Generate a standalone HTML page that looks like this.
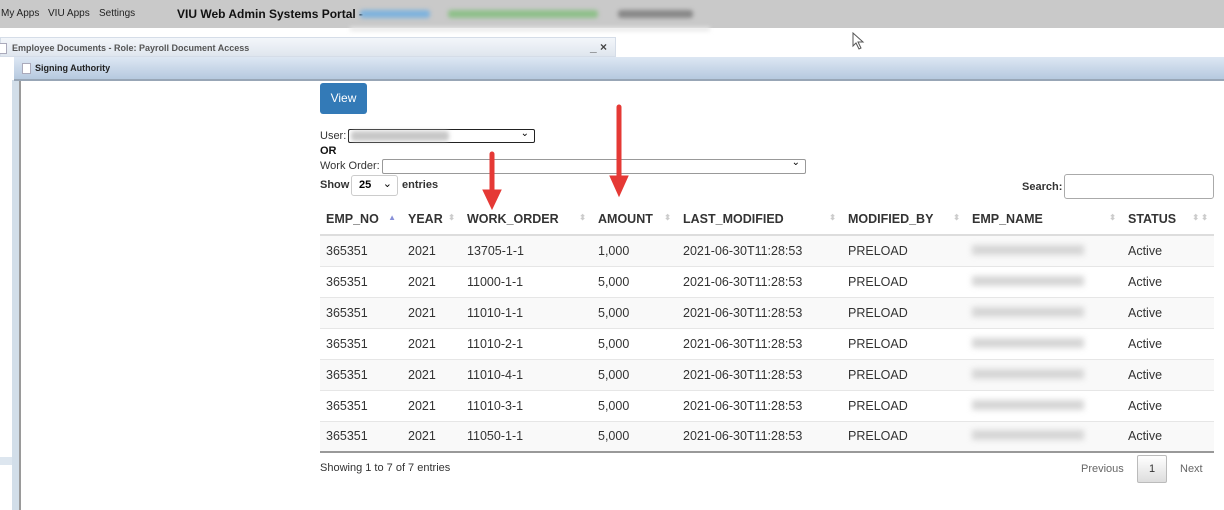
<!DOCTYPE html>
<html><head><style>
*{margin:0;padding:0;box-sizing:border-box}
body{width:1224px;height:510px;overflow:hidden;background:#fff;font-family:"Liberation Sans",Arial,sans-serif;position:relative}
.a{position:absolute}
.top{left:0;top:0;width:1224px;height:28px;background:#c9c9c9}
.top span{position:absolute;top:8px;font-size:10px;color:#222}
.blur{filter:blur(2px);position:absolute;border-radius:3px}
.win{left:0;top:37px;width:616px;height:20px;background:linear-gradient(#f3f6fa,#dfe6ee);border:1px solid #d5dde8;font-size:9px;font-weight:bold;color:#555}
.sig{left:14px;top:57px;width:1210px;height:24px;background:linear-gradient(#dde7f3,#b6c9df);border-bottom:2px solid #98a6b6;font-size:9px;font-weight:bold;color:#222}
.doc{width:9px;height:11px;background:#fff;border:1px solid #aab;position:absolute}
.content{left:19px;top:81px;width:1205px;height:429px;border-left:2px solid #9a9a9a;background:#fff}
.strip{left:12px;top:80px;width:7px;height:430px;background:#d2dee9}
.btn{left:320px;top:83px;width:47px;height:31px;background:#337ab7;border-radius:3px;color:#fff;font-size:12px;text-align:center;line-height:30px}
.t{font-size:11px;color:#333}
table{position:absolute;left:320px;top:203px;width:894px;border-collapse:collapse;font-size:12.5px;color:#333}
th{text-align:left;height:32px;padding-left:6px;font-weight:bold;border-bottom:2px solid #ddd;position:relative}
td{height:31px;padding-left:6px;border-top:1px solid #e6e6e6}
tr:nth-child(odd) td{background:#f9f9f9}
tbody tr:last-child td{border-bottom:2px solid #999}
.s{position:absolute;right:6px;top:10px;font-size:8px;color:#ccc}
.nm{display:inline-block;width:112px;height:10px;background:#d6d6d6;filter:blur(3px)}
</style></head><body>
<div class="a top">
<span style="left:1px">My Apps</span><span style="left:48px">VIU Apps</span><span style="left:99px">Settings</span>
<span style="left:177px;top:7px;font-size:12px;font-weight:bold;color:#111">VIU Web Admin Systems Portal -</span>
<div class="blur" style="left:360px;top:10px;width:70px;height:8px;background:#7fb3dd"></div>
<div class="blur" style="left:448px;top:10px;width:150px;height:8px;background:#8fc08a"></div>
<div class="blur" style="left:618px;top:10px;width:75px;height:8px;background:#888"></div>
</div>
<div class="a" style="left:350px;top:27px;width:360px;height:4px;background:#e8e8e8;filter:blur(2px)"></div>
<div class="a win"><div class="doc" style="left:-3px;top:5px"></div><span style="position:absolute;left:11px;top:5px">Employee Documents - Role: Payroll Document Access</span><span style="position:absolute;left:589px;top:2px;font-size:12px;color:#444">_ ×</span></div>
<div class="a strip"></div>
<div class="a sig"><div class="doc" style="left:8px;top:6px"></div><span style="position:absolute;left:21px;top:6px">Signing Authority</span></div>
<div class="a content"></div>
<div class="a" style="left:0;top:457px;width:12px;height:8px;background:#dde6ef"></div>
<svg class="a" style="left:852px;top:32px" width="14" height="18"><path d="M1 1 L1 14 L4 11 L7 17 L9 16 L6 10 L11 10 Z" fill="#fff" stroke="#555" stroke-width="1"/></svg>
<div class="a btn">View</div>
<div class="a t" style="left:320px;top:130px">User:</div>
<div class="a" style="left:348px;top:129px;width:187px;height:14px;border:1.5px solid #222;border-radius:2px"><div class="blur" style="left:2px;top:1px;width:98px;height:10px;background:#c8c8c8"></div><span style="position:absolute;right:5px;top:-2px;font-size:10px">⌄</span></div>
<div class="a t" style="left:320px;top:145px;font-weight:bold;font-size:11px;color:#111">OR</div>
<div class="a t" style="left:320px;top:160px">Work Order:</div>
<div class="a" style="left:382px;top:159px;width:424px;height:15px;border:1px solid #999;border-radius:2px"><span style="position:absolute;right:5px;top:-3px;font-size:10px">⌄</span></div>
<div class="a t" style="left:320px;top:179px;font-weight:bold">Show</div>
<div class="a" style="left:351px;top:175px;width:47px;height:21px;border:1px solid #ccc;border-radius:3px;font-size:11px;font-weight:bold;padding:3px 0 0 7px">25 <span style="position:absolute;right:5px;top:1px;font-weight:normal">⌄</span></div>
<div class="a t" style="left:402px;top:179px;font-weight:bold">entries</div>
<div class="a t" style="left:1022px;top:181px;font-weight:bold">Search:</div>
<div class="a" style="left:1064px;top:174px;width:150px;height:25px;border:1px solid #aaa;border-radius:3px"></div>
<table>
<thead><tr>
<th style="width:82px">EMP_NO<span class="s" style="color:#8890d8">▲</span></th>
<th style="width:59px">YEAR<span class="s">⬍</span></th>
<th style="width:131px">WORK_ORDER<span class="s">⬍</span></th>
<th style="width:85px">AMOUNT<span class="s">⬍</span></th>
<th style="width:165px">LAST_MODIFIED<span class="s">⬍</span></th>
<th style="width:124px">MODIFIED_BY<span class="s">⬍</span></th>
<th style="width:156px">EMP_NAME<span class="s">⬍</span></th>
<th>STATUS<span class="s">⬍ ⬍</span></th>
</tr></thead>
<tbody>
<tr><td>365351</td><td>2021</td><td>13705-1-1</td><td>1,000</td><td>2021-06-30T11:28:53</td><td>PRELOAD</td><td><span class="nm"></span></td><td>Active</td></tr>
<tr><td>365351</td><td>2021</td><td>11000-1-1</td><td>5,000</td><td>2021-06-30T11:28:53</td><td>PRELOAD</td><td><span class="nm"></span></td><td>Active</td></tr>
<tr><td>365351</td><td>2021</td><td>11010-1-1</td><td>5,000</td><td>2021-06-30T11:28:53</td><td>PRELOAD</td><td><span class="nm"></span></td><td>Active</td></tr>
<tr><td>365351</td><td>2021</td><td>11010-2-1</td><td>5,000</td><td>2021-06-30T11:28:53</td><td>PRELOAD</td><td><span class="nm"></span></td><td>Active</td></tr>
<tr><td>365351</td><td>2021</td><td>11010-4-1</td><td>5,000</td><td>2021-06-30T11:28:53</td><td>PRELOAD</td><td><span class="nm"></span></td><td>Active</td></tr>
<tr><td>365351</td><td>2021</td><td>11010-3-1</td><td>5,000</td><td>2021-06-30T11:28:53</td><td>PRELOAD</td><td><span class="nm"></span></td><td>Active</td></tr>
<tr><td>365351</td><td>2021</td><td>11050-1-1</td><td>5,000</td><td>2021-06-30T11:28:53</td><td>PRELOAD</td><td><span class="nm"></span></td><td>Active</td></tr>
</tbody></table>
<div class="a t" style="left:320px;top:462px">Showing 1 to 7 of 7 entries</div>
<div class="a t" style="left:1081px;top:463px;color:#666">Previous</div>
<div class="a" style="left:1137px;top:455px;width:30px;height:28px;border:1px solid #bbb;border-radius:2px;background:linear-gradient(#fff,#ddd);font-size:11px;text-align:center;line-height:26px;color:#333">1</div>
<div class="a t" style="left:1180px;top:463px;color:#666">Next</div>
<svg class="a" style="left:0;top:0" width="1224" height="510">
<g fill="#e53935" stroke="#e53935">
<line x1="492" y1="154" x2="492" y2="192" stroke-width="5" stroke-linecap="round"/>
<polygon points="483,190 501,190 492,209" stroke-width="1"/>
<line x1="619" y1="107" x2="619" y2="178" stroke-width="5" stroke-linecap="round"/>
<polygon points="610,176 628,176 619,196" stroke-width="1"/>
</g></svg>
</body></html>
